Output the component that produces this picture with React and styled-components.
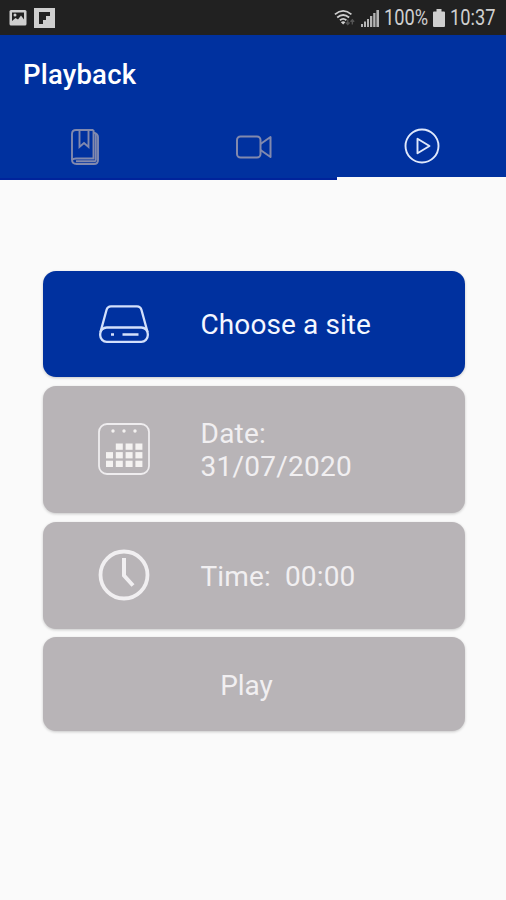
import React from "react"
import styled, {createGlobalStyle} from "styled-components"

const GlobalStyle = createGlobalStyle`
  body {
    margin: 0;
    background-color: #fafafa;
    font-family: Roboto, "Liberation Sans", sans-serif;
  }
`

const Screen = styled.div`
  width: 506px;
  height: 900px;
  overflow: hidden;
  background-color: #fafafa;
`

const StatusBar = styled.div`
  height: 35px;
  box-sizing: border-box;
  padding: 0 9px;
  background-color: #212121;
  color: #cfcfcf;
  display: flex;
  justify-content: space-between;
`

const StatusGroup = styled.div`
  display: flex;
  align-items: center;
  gap: ${props => props.$gap}px;

  svg {
    display: block;
    flex: none;
  }
`

const StatusText = styled.div`
  width: ${props => props.$width}px;
  font-size: 22px;
  line-height: 36px;
  white-space: nowrap;

  span {
    display: inline-block;
    transform: scaleX(0.83);
    transform-origin: left center;
  }
`

const Header = styled.div`
  height: 145px;
  background-color: #00319f;
  display: flex;
  flex-direction: column;
`

const Title = styled.div`
  height: 80px;
  padding-left: 23px;
  color: #ffffff;
  font-size: 27.5px;
  font-weight: 500;
  line-height: 80px;
  letter-spacing: 0.2px;
`

const Tabs = styled.div`
  flex: 1;
  display: flex;
`

const Tab = styled.div`
  flex: 1;
  display: flex;
  justify-content: center;
  align-items: center;
  padding-left: 1px;
  color: ${props => props.$active ? "#dfe8fb" : "#8189ae"};
  border-bottom: ${props => props.$active ? "3px solid #fafafa" : "2px solid #00239b"};
`

const Options = styled.div`
  margin: 90.5px 41.5px 0 42.5px;
  display: flex;
  flex-direction: column;
  gap: 8.5px;
`

const Card = styled.div`
  height: ${props => props.$height}px;
  border-radius: 13px;
  background-color: ${props => props.$primary ? "#00319f" : "#b8b4b7"};
  color: ${props => props.$primary ? "#f4f7ff" : "#f1eff1"};
  box-shadow: 0 1px 3px rgba(0, 0, 0, 0.2);
  display: flex;
  align-items: center;
`

const CardIcon = styled.div`
  width: 158px;
  box-sizing: border-box;
  padding-left: 5px;
  display: flex;
  justify-content: center;
`

const Label = styled.div`
  padding-top: 2px;
  font-size: 28px;
  line-height: 33px;
  letter-spacing: ${props => props.$spacing || 0}px;
  white-space: pre-line;
`

const PlayLabel = styled(Label)`
  flex: 1;
  padding-right: 14px;
  text-align: center;
`

const Gap = styled.span`
  margin-left: 14px;
`

const PictureIcon = () => (
  <svg width="18" height="18" viewBox="0 0 18 18">
    <rect x="0.5" y="1" width="17" height="15.5" rx="1.5" fill="#cfcfcf"/>
    <path d="M3 3.500h12v7l-3-4-3 4-2.500-1.500L3 12z" fill="#212121"/>
    <circle cx="6" cy="6" r="1.500" fill="#cfcfcf"/>
  </svg>
)

const FlipIcon = () => (
  <svg width="21" height="20" viewBox="0 0 21 20">
    <rect width="21" height="20" fill="#cfcfcf"/>
    <path d="M5 4h11v4h-4v4H9v4H5z" fill="#212121"/>
  </svg>
)

const WifiIcon = () => (
  <svg width="22" height="20" viewBox="0 0 24 20" fill="none" stroke="#cfcfcf" strokeWidth="2">
    <path d="M1 6Q10 -1.500 19 6M3.500 9.500Q10 4 16.500 9.500M6.500 12.500Q10 9.500 13.500 12.500"/>
    <path d="M7.500 14.500Q10 12.500 12.500 14.500L10 17z" fill="#cfcfcf" stroke="none"/>
    <path d="M15 12v5M13 15l2 2 2-2M20 17v-5M18 14l2-2 2 2" stroke="#555555" strokeWidth="1.500"/>
  </svg>
)

const SignalIcon = () => (
  <svg width="18" height="18" viewBox="0 0 18 18" fill="#b5b5b5">
    <path d="M0 15h2v3H0zM3 12.500h2V18H3zM6 10h2v8H6zM9 7h2.300v11H9zM12.200 4h2.300v14h-2.300zM15.400 1H18v17h-2.600z"/>
  </svg>
)

const BatteryIcon = () => (
  <svg width="12" height="18" viewBox="0 0 12 18">
    <path d="M3.500 0h5v2.500H11q1 0 1 1V17q0 1-1 1H1q-1 0-1-1V3.500q0-1 1-1h2.500z" fill="#cfcfcf"/>
  </svg>
)

const BookIcon = () => (
  <svg width="28" height="36" viewBox="0 0 28 36" fill="none" stroke="currentColor" strokeWidth="1.900">
    <path d="M22.500 1H5Q1 1 1 5v25.500Q1 35 5.500 35H23q4 0 4-4V8q0-3-4.500-4.500"/>
    <path d="M1.500 31Q2 29.500 5 29.500h17.500V1M5 32.300h18.500q1.300 0 1.300-1.500V5"/>
    <path d="M8.500 1v17l4.500-4 4.500 4V1"/>
  </svg>
)

const CameraIcon = () => (
  <svg width="36" height="24" viewBox="0 0 36 24" fill="none" stroke="currentColor" strokeWidth="2" strokeLinejoin="round">
    <rect x="1" y="1.500" width="23.500" height="21" rx="3.500"/>
    <path d="M24.500 9L34.500 2v20l-10-7"/>
  </svg>
)

const PlayIcon = () => (
  <svg width="36" height="36" viewBox="0 0 36 36" fill="none" stroke="currentColor" strokeWidth="1.900" strokeLinejoin="round">
    <circle cx="18" cy="18" r="16.500"/>
    <path d="M13.500 10.800v14.400L25.500 18z"/>
  </svg>
)

const DriveIcon = () => (
  <svg width="50" height="38" viewBox="0 0 50 38" fill="none" stroke="#d3e0fb" strokeWidth="2.300">
    <path d="M1.500 27L7.500 5Q8.500 1.300 12 1.300h26Q41.500 1.300 42.500 5l6 22"/>
    <rect x="1.200" y="22.500" width="47.600" height="14.300" rx="6.500"/>
    <path d="M12 29.500h3M23.500 29.500h16"/>
  </svg>
)

// day cells, the first row starts one column later
const DAYS = [1, 2, 3, 4, 5, 6, 7, 8, 9, 10, 11]

const CalendarIcon = () => (
  <svg width="52" height="52" viewBox="0 0 52 52" fill="#f4f2f1">
    <rect x="1" y="1" width="50" height="50" rx="8" fill="none" stroke="#efedef" strokeWidth="1.800"/>
    {[15, 26, 37].map(x => <circle key={x} cx={x} cy="8" r="1.700"/>)}
    {DAYS.map(day => (
      <rect
        key={day}
        x={8 + (day % 4) * 9.8}
        y={20.5 + Math.floor(day / 4) * 8.6}
        width="7"
        height="6.300"
      />
    ))}
  </svg>
)

const ClockIcon = () => (
  <svg width="52" height="52" viewBox="0 0 52 52" fill="none" stroke="#f1eff1">
    <circle cx="26" cy="26" r="23.500" strokeWidth="3.800"/>
    <path d="M26 9v17.500l9 10" strokeWidth="4"/>
  </svg>
)

const StatusIcons = () => (
  <StatusBar>
    <StatusGroup $gap={7}>
      <PictureIcon/>
      <FlipIcon/>
    </StatusGroup>
    <StatusGroup $gap={5}>
      <WifiIcon/>
      <SignalIcon/>
      <StatusText $width={44}><span>100%</span></StatusText>
      <BatteryIcon/>
      <StatusText $width={47}><span>10:37</span></StatusText>
    </StatusGroup>
  </StatusBar>
)

const App = () => {
  return (
    <>
      <GlobalStyle/>
      <Screen>
        <StatusIcons/>
        <Header>
          <Title>Playback</Title>
          <Tabs>
            <Tab><BookIcon/></Tab>
            <Tab><CameraIcon/></Tab>
            <Tab $active><PlayIcon/></Tab>
          </Tabs>
        </Header>
        <Options>
          <Card $primary $height={106.5}>
            <CardIcon><DriveIcon/></CardIcon>
            <Label $spacing={0.1}>Choose a site</Label>
          </Card>
          <Card $height={127.5}>
            <CardIcon><CalendarIcon/></CardIcon>
            <Label $spacing={0.25}>{"Date:\n31/07/2020"}</Label>
          </Card>
          <Card $height={107}>
            <CardIcon><ClockIcon/></CardIcon>
            <Label $spacing={0.15}>Time:<Gap>00:00</Gap></Label>
          </Card>
          <Card $height={94}>
            <PlayLabel>Play</PlayLabel>
          </Card>
        </Options>
      </Screen>
    </>
  )
}

export default App
